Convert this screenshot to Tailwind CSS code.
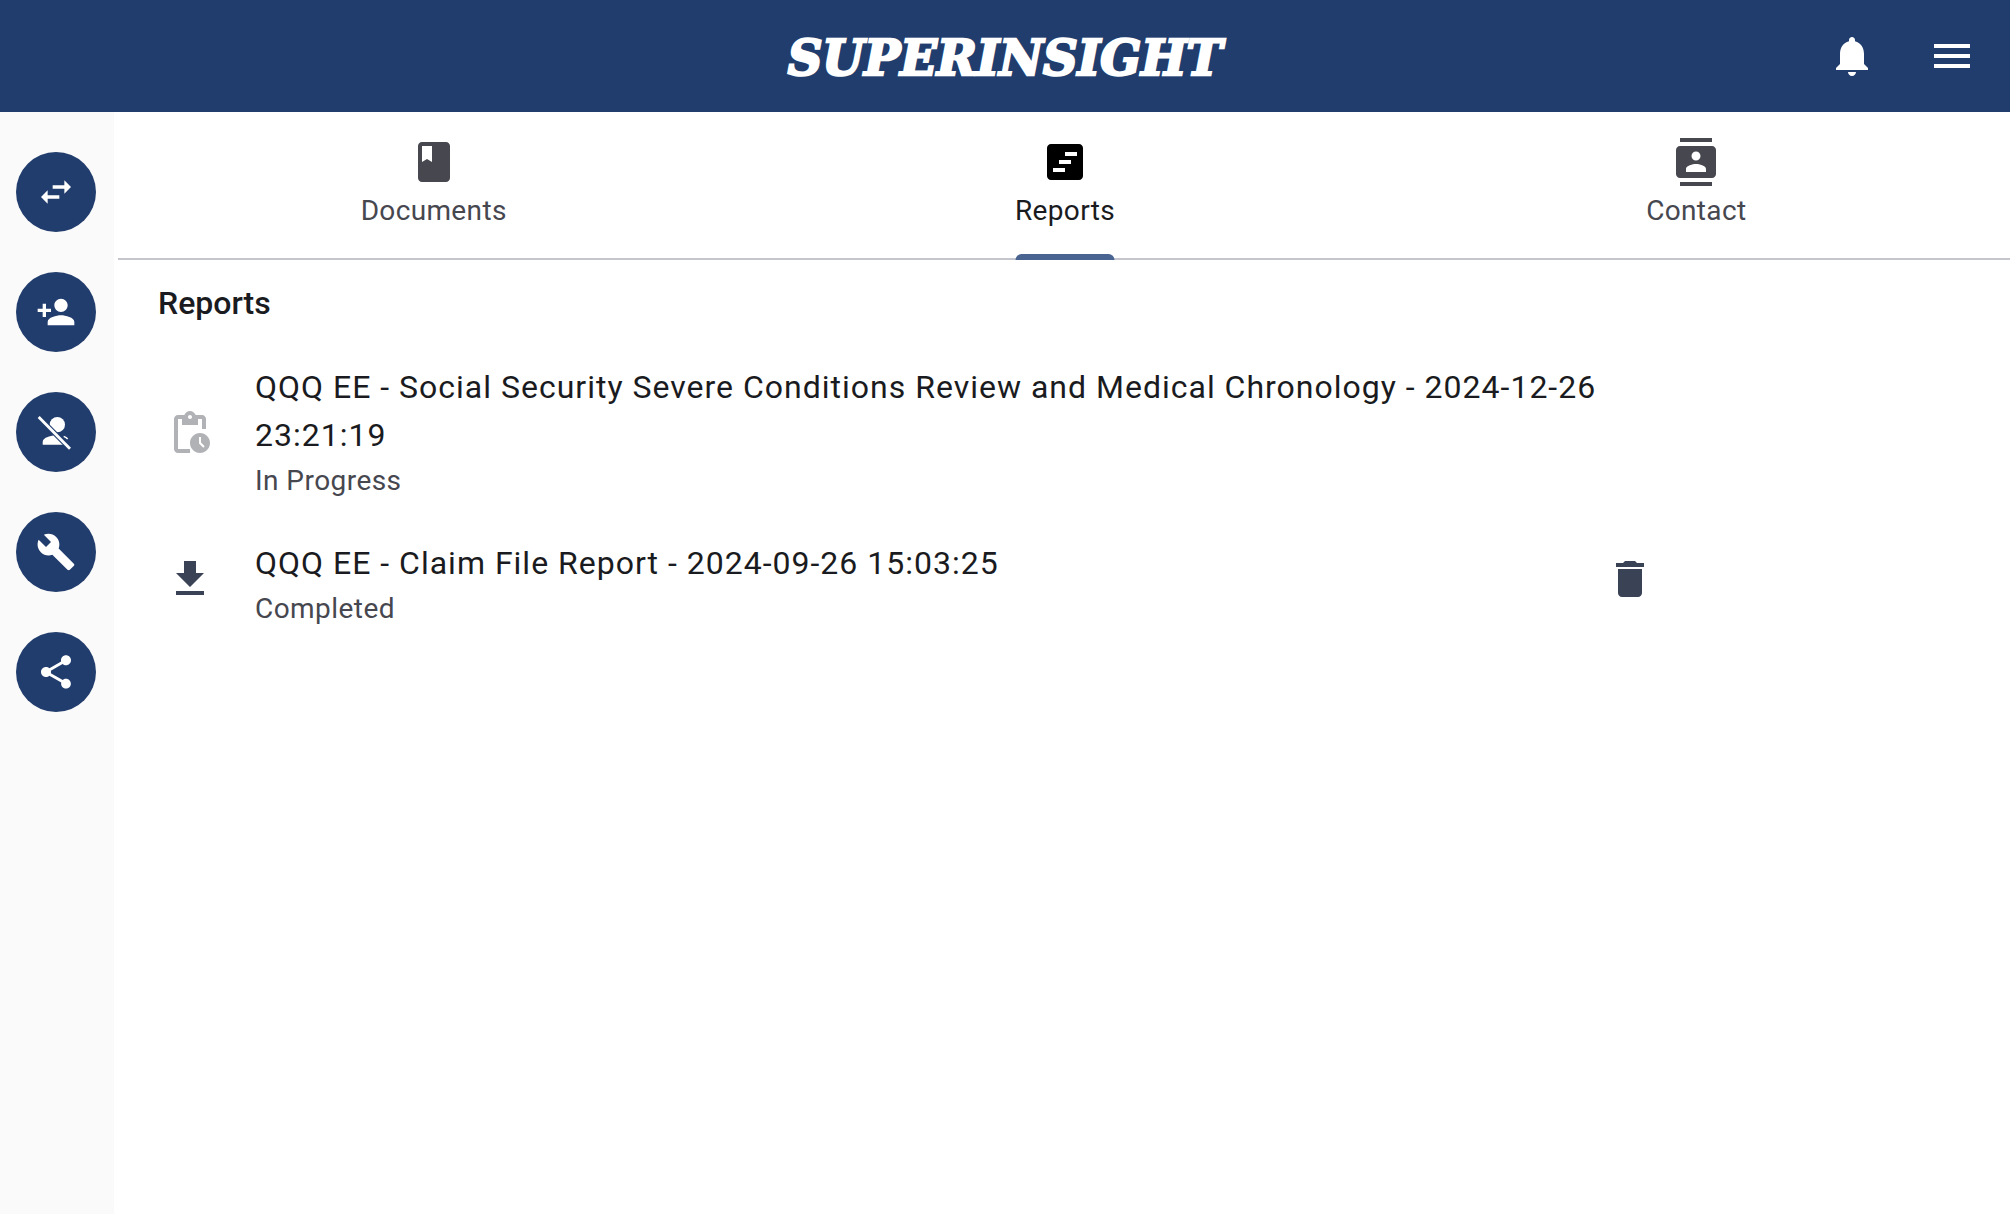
<!DOCTYPE html>
<html>
<head>
  <title>Superinsight Reports</title>
  <script src="https://cdn.jsdelivr.net/npm/@tailwindcss/browser@4"></script>
</head>
<body class="bg-white h-screen overflow-hidden flex flex-col font-['Roboto',sans-serif]">
  <!-- Top bar -->
  <header class="h-[112px] shrink-0 bg-[#213d6d] grid grid-cols-[1fr_auto_1fr] items-center px-[34px]">
    <div></div>
    <div class="pt-[3px] font-['DejaVu_Serif',serif] font-bold italic text-[48px] leading-none text-white [-webkit-text-stroke:2.5px_white] tracking-[0px]">SUPERINSIGHT</div>
    <div class="flex justify-end gap-[52px]">
      <svg class="w-12 h-12 fill-white" viewBox="0 0 24 24"><path d="M12 22c1.1 0 2-.9 2-2h-4c0 1.1.89 2 2 2zm6-6v-5c0-3.07-1.64-5.64-4.5-6.32V4c0-.83-.67-1.5-1.5-1.5s-1.5.67-1.5 1.5v.68C7.63 5.36 6 7.92 6 11v5l-2 2v1h16v-1l-2-2z"/></svg>
      <svg class="w-12 h-12 fill-white" viewBox="0 0 24 24"><path d="M3 18h18v-2H3v2zm0-5h18v-2H3v2zm0-7v2h18V6H3z"/></svg>
    </div>
  </header>

  <div class="flex flex-1 min-h-0">
    <!-- Side actions -->
    <aside class="w-[114px] shrink-0 bg-[#fafafa] pt-10 pl-4 flex flex-col gap-10">
      <button class="w-20 h-20 rounded-full bg-[#213d6d] flex items-center justify-center">
        <svg class="w-10 h-10 fill-white" viewBox="0 0 24 24"><path d="M6.99 11L3 15l3.99 4v-3H14v-2H6.99v-3zM21 9l-3.99-4v3H10v2h7.01v3L21 9z"/></svg>
      </button>
      <button class="w-20 h-20 rounded-full bg-[#213d6d] flex items-center justify-center">
        <svg class="w-10 h-10 fill-white" viewBox="0 0 24 24"><path d="M15 12c2.21 0 4-1.79 4-4s-1.79-4-4-4-4 1.79-4 4 1.79 4 4 4zm-9-2V7H4v3H1v2h3v3h2v-3h3v-2H6zm9 4c-2.67 0-8 1.34-8 4v2h16v-2c0-2.66-5.33-4-8-4z"/></svg>
      </button>
      <button class="w-20 h-20 rounded-full bg-[#213d6d] flex items-center justify-center">
        <svg class="w-10 h-10" viewBox="0 0 24 24">
          <circle class="fill-white" cx="12.8" cy="7.6" r="4.6"/>
          <path class="fill-white" d="M4 19.6V18c0-2.66 5.33-4 8-4h.5l5.5 5.6z"/>
          <path class="stroke-[#213d6d]" stroke-width="3" d="M1.6 3l18.8 19"/>
          <path class="stroke-white" stroke-width="1.7" d="M1.6 3l18.8 19"/>
          <path class="stroke-white fill-none" stroke-width="0.8" d="M16.6 14.6c1 .4 1.9.9 2.4 1.6"/>
        </svg>
      </button>
      <button class="w-20 h-20 rounded-full bg-[#213d6d] flex items-center justify-center">
        <svg class="w-10 h-10 fill-white" viewBox="0 0 24 24"><path d="M22.7 19l-9.1-9.1c.9-2.3.4-5-1.5-6.9-2-2-5-2.4-7.4-1.3L9 6 6 9 1.6 4.7C.4 7.1.9 10.1 2.9 12.1c1.9 1.9 4.6 2.4 6.9 1.5l9.1 9.1c.4.4 1 .4 1.4 0l2.3-2.3c.5-.4.5-1.1.1-1.4z"/></svg>
      </button>
      <button class="w-20 h-20 rounded-full bg-[#213d6d] flex items-center justify-center">
        <svg class="w-10 h-10 fill-white" viewBox="0 0 24 24"><path d="M18 16.08c-.76 0-1.44.3-1.96.77L8.91 12.7c.05-.23.09-.46.09-.7s-.04-.47-.09-.7l7.05-4.11c.54.5 1.25.81 2.04.81 1.66 0 3-1.34 3-3s-1.34-3-3-3-3 1.34-3 3c0 .24.04.47.09.7L8.04 9.81C7.5 9.31 6.79 9 6 9c-1.66 0-3 1.34-3 3s1.34 3 3 3c.79 0 1.5-.31 2.04-.81l7.12 4.16c-.05.21-.08.43-.08.65 0 1.61 1.31 2.92 2.92 2.92 1.61 0 2.92-1.31 2.92-2.92s-1.31-2.92-2.92-2.92z"/></svg>
      </button>
    </aside>

    <main class="flex-1 min-w-0 pl-1">
      <!-- Tabs -->
      <nav class="grid grid-cols-3 w-[1894px] h-[148px] border-b-2 border-[#c5c6cd]">
        <div class="relative flex flex-col items-center pt-[26px] text-[#46474f]">
          <svg class="w-12 h-12 fill-[#46474f]" viewBox="0 0 24 24"><path d="M18 2H6c-1.1 0-2 .9-2 2v16c0 1.1.9 2 2 2h12c1.1 0 2-.9 2-2V4c0-1.1-.9-2-2-2zM6 4h5v8l-2.5-1.5L6 12V4z"/></svg>
          <span class="text-[28px] leading-[50px] tracking-[0.35px] font-[380]">Documents</span>
        </div>
        <div class="relative flex flex-col items-center pt-[26px] text-[#1a1b20]">
          <svg class="w-12 h-12" viewBox="0 0 24 24"><path fill-rule="evenodd" d="M19 3H5c-1.1 0-2 .9-2 2v14c0 1.1.9 2 2 2h14c1.1 0 2-.9 2-2V5c0-1.1-.9-2-2-2zM12 7h6v2h-6V7zM9 11h6v2H9v-2zM6 15h6v2H6v-2z"/></svg>
          <span class="text-[28px] leading-[50px] tracking-[0.35px] font-[380]">Reports</span>
          <div class="absolute left-1/2 -translate-x-1/2 bottom-[-2px] w-[99px] h-[6px] rounded-t-[6px] bg-[#4a6491]"></div>
        </div>
        <div class="relative flex flex-col items-center pt-[26px] text-[#46474f]">
          <svg class="w-12 h-12 fill-[#46474f]" viewBox="0 0 24 24"><path d="M20 0H4v2h16V0zM4 24h16v-2H4v2zM20 4H4c-1.1 0-2 .9-2 2v12c0 1.1.9 2 2 2h16c1.1 0 2-.9 2-2V6c0-1.1-.9-2-2-2zm-8 2.75c1.24 0 2.25 1.01 2.25 2.25s-1.01 2.25-2.25 2.25S9.75 10.24 9.75 9 10.76 6.75 12 6.75zM17 17H7v-1.5c0-1.67 3.33-2.5 5-2.5s5 .83 5 2.5V17z"/></svg>
          <span class="text-[28px] leading-[50px] tracking-[0.35px] font-[380]">Contact</span>
        </div>
      </nav>

      <!-- Reports list -->
      <section class="pl-[41px] pt-[23px]">
        <h2 class="-ml-px text-[32px] leading-[40px] font-medium text-[#1a1b20]">Reports</h2>
        <ul class="mt-[40px] w-[1495px] flex flex-col gap-[24px]">
          <li class="flex items-center">
            <svg class="w-12 h-12 ml-[7px] mr-[41px] shrink-0 fill-[#b1b2b5]" viewBox="0 0 24 24"><path d="M17 12c-2.76 0-5 2.24-5 5s2.24 5 5 5 5-2.24 5-5-2.24-5-5-5zm1.65 7.35L16.5 17.2V14h1v2.79l1.85 1.85-.7.71zM18 3h-3.18C14.4 1.84 13.3 1 12 1s-2.4.84-2.82 2H6c-1.1 0-2 .9-2 2v15c0 1.1.9 2 2 2h6v-2H6V5h2v3h8V5h2v5h2V5c0-1.1-.9-2-2-2zm-6 2c-.55 0-1-.45-1-1s.45-1 1-1 1 .45 1 1-.45 1-1 1z"/></svg>
            <div class="flex-1 min-w-0">
              <p class="text-[32px] leading-[48px] tracking-[1px] font-[380] text-[#1a1b20]">QQQ EE - Social Security Severe Conditions Review and Medical Chronology - 2024-12-26 23:21:19</p>
              <p class="text-[28px] leading-[44px] tracking-[0.45px] font-[380] text-[#46474f]">In Progress</p>
            </div>
          </li>
          <li class="flex items-center">
            <svg class="w-12 h-12 ml-[7px] mr-[41px] shrink-0 fill-[#3a4256]" viewBox="0 0 24 24"><path d="M19 9h-4V3H9v6H5l7 7 7-7zM5 18v2h14v-2H5z"/></svg>
            <div class="flex-1 min-w-0 pt-[12px]">
              <p class="text-[32px] leading-[48px] tracking-[1px] font-[380] text-[#1a1b20]">QQQ EE - Claim File Report - 2024-09-26 15:03:25</p>
              <p class="text-[28px] leading-[44px] tracking-[0.45px] font-[380] text-[#46474f]">Completed</p>
            </div>
            <svg class="w-12 h-12 shrink-0 fill-[#3a4256]" viewBox="0 0 24 24"><path d="M6 19c0 1.1.9 2 2 2h8c1.1 0 2-.9 2-2V7H6v12zM19 4h-3.5l-1-1h-5l-1 1H5v2h14V4z"/></svg>
          </li>
        </ul>
      </section>
    </main>
  </div>
</body>
</html>
